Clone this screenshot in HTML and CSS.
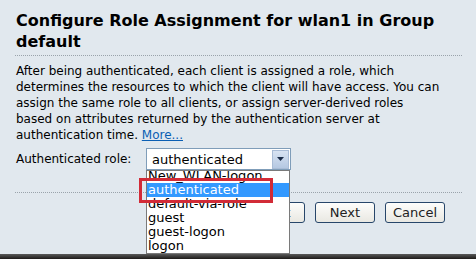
FILE: index.html
```html
<!DOCTYPE html>
<html lang="en">
<head>
<meta charset="utf-8">
<title>Configure Role Assignment</title>
<link rel="stylesheet" href="styles.css">
</head>
<body>
	<div class="page">
		<h1 class="title">Configure Role Assignment for wlan1 in Group default</h1>
		<p class="intro">After being authenticated, each client is assigned a role, which<br>
		determines the resources to which the client will have access. You can<br>
		assign the same role to all clients, or assign server-derived roles<br>
		based on attributes returned by the authentication server at<br>
		authentication time. <a href="#">More...</a></p>

		<div class="role_row">
			<label class="role_label">Authenticated role:</label>
			<div class="select">
				<span class="select_value">authenticated</span>
				<span class="select_arrow">
					<svg width="7" height="4" viewBox="0 0 7 4"><path d="M0 0h7L3.5 4z" fill="#1b2c48"/></svg>
				</span>
				<ul class="select_list">
					<li>New_WLAN-logon</li>
					<li class="selected">authenticated</li>
					<li>default-via-role</li>
					<li>guest</li>
					<li>guest-logon</li>
					<li>logon</li>
				</ul>
				<span class="callout"></span>
			</div>
		</div>

		<div class="actions">
			<button class="btn">Back</button>
			<button class="btn">Next</button>
			<button class="btn">Cancel</button>
		</div>
	</div>
	<div class="taskbar"></div>
</body>
</html>
```

FILE: styles.css
```css
html, body {
	margin: 0;
	height: 100%;
}
body {
	background: #e1e8ee;
	font: normal 12px "DejaVu Sans", Verdana, sans-serif;
	color: #000;
	display: flex;
	flex-direction: column;
}
a {
	color: #0a5fb4;
}

.page {
	flex: 1;
	padding: 10px 14px 0 15px;
}

.title {
	margin: 0;
	padding: 0 0 3px 1px;
	font: bold 16px/21px "DejaVu Sans", Verdana, sans-serif;
	border-bottom: 1px dotted #9aa3ab;
}

.intro {
	margin: 7px 0 0 0;
	padding-left: 1px;
	line-height: 16px;
	white-space: nowrap;
}

/* role picker */
.role_row {
	display: flex;
	align-items: center;
	margin-top: 5px;
	padding-left: 1px;
}
.role_label {
	width: 130px;
}
.select {
	position: relative;
	width: 143px;
	height: 20px;
	border: 1px solid #7f9db9;
	background: #fff;
	display: flex;
	align-items: center;
	font-size: 13px;
}
.select_value {
	flex: 1;
	padding-left: 5px;
}
.select_arrow {
	width: 15px;
	height: 17px;
	margin-right: 1px;
	border: 1px solid #a9bcd6;
	background: linear-gradient(#d8e3f2, #b5c8e2);
	display: flex;
	align-items: center;
	justify-content: center;
}
.select_list {
	position: absolute;
	z-index: 2;
	left: -1px;
	top: 21px;
	width: 142px;
	height: 82px;
	margin: 0;
	padding: 0;
	list-style: none;
	background: #fff;
	border: 1px solid #7a7a7a;
	overflow: hidden;
}
.select_list li {
	height: 14px;
	line-height: 14px;
	padding-left: 1px;
	font-size: 13px;
	white-space: nowrap;
}
.select_list li:first-child {
	margin-top: -2px;
}
.select_list li.selected {
	background: #3399ff;
	color: #fff;
}
.callout {
	position: absolute;
	z-index: 3;
	left: -8px;
	top: 29px;
	width: 128px;
	height: 19px;
	border: 3px solid #d22b37;
}

/* buttons */
.actions {
	margin-top: 22px;
	padding: 9px 17px 0 0;
	border-top: 1px dotted #9aa3ab;
	display: flex;
	justify-content: flex-end;
	gap: 10px;
}
.btn {
	width: 60px;
	height: 21px;
	padding: 0;
	font: normal 13px "DejaVu Sans", Verdana, sans-serif;
	color: #222;
	background: linear-gradient(#fdfdfb, #e9e8e2);
	border: 1px solid #27466a;
	border-radius: 3px;
}

.taskbar {
	height: 5px;
	background: linear-gradient(#5a5a5a, #1c1a18);
}
```
